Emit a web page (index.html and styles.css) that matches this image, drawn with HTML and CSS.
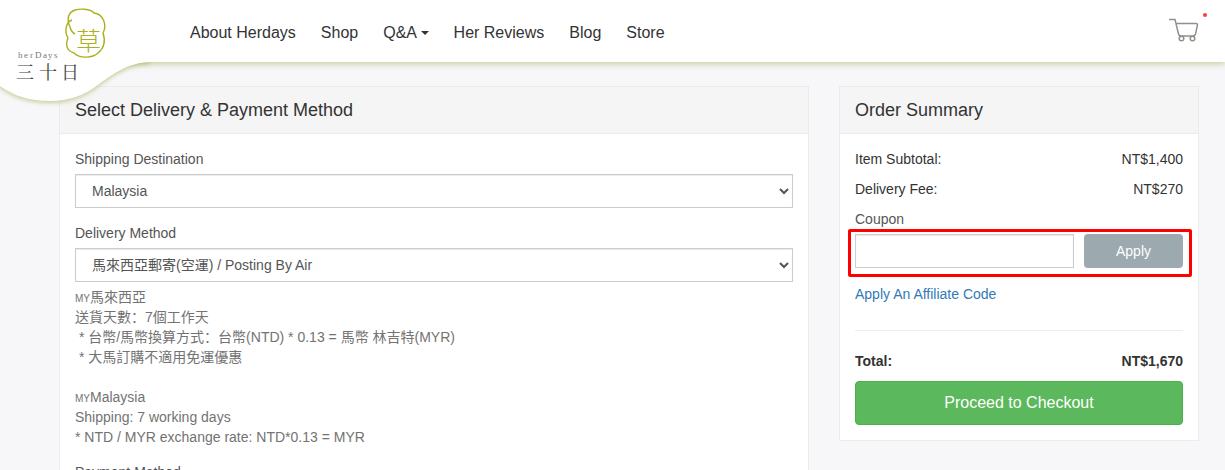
FILE: index.html
```html
<!DOCTYPE html>
<html lang="en">
<head>
    <meta charset="UTF-8">
    <meta name="viewport" content="width=device-width, initial-scale=1.0">
    <title>Checkout | herDays</title>
    <link rel="stylesheet" href="styles.css">
</head>
<body>
    <header class="site-header">
        <a class="logo" href="#" aria-label="herDays">
            <svg width="150" height="110" viewBox="0 0 150 110">
                <clipPath id="below-bar">
                    <rect x="0" y="62" width="160" height="60"/>
                </clipPath>
                <g clip-path="url(#below-bar)">
                    <path class="logo-wave" d="M-10 50 H150 V62 C128 63 116 72 99 84 C84 96 68 101 50 101 C30 101 14 96 0 86 L-10 78 Z"/>
                </g>
                <path class="logo-ring" d="M72 20 C66 22 64 31 68 38 C65 45 67 51 74 53 C80 59 93 58 98 53 C103 49 106 42 103 33 C107 26 104 14 94 13 C90 8 79 9 75 10 C67 13 67 20 70 27 C71 31 73 33 75 34"/>
                <text class="logo-mark" x="76" y="50">草</text>
                <text class="logo-name" x="18 24 30 35 43 48 54" y="58">herDays</text>
                <text class="logo-title" x="16 39 61" y="79">三十日</text>
            </svg>
        </a>
        <nav class="main-nav">
            <a href="#">About Herdays</a>
            <a href="#">Shop</a>
            <a href="#">Q&amp;A <span class="caret"></span></a>
            <a href="#">Her Reviews</a>
            <a href="#">Blog</a>
            <a href="#">Store</a>
        </nav>
        <a class="cart" href="#" aria-label="Cart">
            <svg width="30" height="26" viewBox="0 0 30 26">
                <path d="M0 1.5 H6 L9.500 16 Q10 18 12 18 H24 Q26 18 26.500 16 L28.500 7 Q28.500 5.500 27 5.500 H7"/>
                <circle cx="12.500" cy="20.500" r="2.300"/>
                <circle cx="23.500" cy="20.500" r="2.300"/>
            </svg>
            <span class="cart-dot"></span>
        </a>
    </header>

    <main class="checkout">
        <section class="panel">
            <h2 class="panel-heading">Select Delivery &amp; Payment Method</h2>
            <div class="panel-body">
                <div class="form-group">
                    <label for="destination">Shipping Destination</label>
                    <select class="form-control" id="destination">
                        <option>Malaysia</option>
                    </select>
                </div>
                <div class="form-group">
                    <label for="delivery">Delivery Method</label>
                    <select class="form-control" id="delivery">
                        <option>馬來西亞郵寄(空運) / Posting By Air</option>
                    </select>
                    <p class="help-block"><small>MY</small>馬來西亞
送貨天數：7個工作天
 * 台幣/馬幣換算方式：台幣(NTD) * 0.13 = 馬幣 林吉特(MYR)
 * 大馬訂購不適用免運優惠

<small>MY</small>Malaysia
Shipping: 7 working days
* NTD / MYR exchange rate: NTD*0.13 = MYR</p>
                </div>
                <div class="form-group">
                    <label for="payment">Payment Method</label>
                    <select class="form-control" id="payment">
                        <option>Credit Card</option>
                    </select>
                </div>
            </div>
        </section>

        <aside class="panel">
            <h2 class="panel-heading">Order Summary</h2>
            <div class="panel-body">
                <div class="summary-row"><span>Item Subtotal:</span><span>NT$1,400</span></div>
                <div class="summary-row"><span>Delivery Fee:</span><span>NT$270</span></div>
                <label for="coupon">Coupon</label>
                <form class="coupon-row">
                    <input class="form-control" type="text" id="coupon">
                    <button class="btn btn-apply" type="button">Apply</button>
                </form>
                <a class="affiliate" href="#">Apply An Affiliate Code</a>
                <hr>
                <div class="summary-row total"><span>Total:</span><span>NT$1,670</span></div>
                <button class="btn btn-checkout" type="button">Proceed to Checkout</button>
            </div>
        </aside>
    </main>
</body>
</html>
```
FILE: styles.css
```css
* {
    box-sizing: border-box;
}

body {
    margin: 0;
    background-color: #f7f7f9;
    color: #333;
    font-family: "Liberation Sans", Arial, "Noto Sans CJK SC", sans-serif;
    font-size: 14px;
    line-height: 20px;
}

/* header */
.site-header {
    position: sticky;
    top: 0;
    z-index: 10;
    display: flex;
    align-items: center;
    height: 62px;
    padding: 0 26px 0 178px;
    background-color: #fff;
    box-shadow: 0 2px 6px rgba(160, 165, 70, 0.5);
}

.logo {
    position: absolute;
    top: 0;
    left: 0;
    height: 110px;
}

.logo svg {
    display: block;
    overflow: visible;
}

.logo-wave {
    fill: #fff;
    filter: drop-shadow(0 2px 2px rgba(160, 165, 70, 0.5));
}

.logo-ring {
    fill: none;
    stroke: #abb11c;
    stroke-width: 1.4;
}

.logo-mark {
    fill: #abb11c;
    font-family: "Noto Sans CJK TC", sans-serif;
    font-size: 25px;
    font-weight: 300;
}

.logo-name {
    fill: #777;
    font-family: "Liberation Serif", serif;
    font-size: 9px;
}

.logo-title {
    fill: #444;
    font-family: "Noto Serif CJK TC", "Noto Sans CJK TC", serif;
    font-size: 18px;
}

.main-nav {
    display: flex;
    gap: 1px;
    margin-top: 3px;
}

.main-nav a {
    padding: 0 12px;
    color: #333;
    font-size: 16px;
    text-decoration: none;
}

.caret {
    display: inline-block;
    vertical-align: middle;
    border-top: 4px solid;
    border-right: 4px solid transparent;
    border-left: 4px solid transparent;
}

.cart {
    position: relative;
    margin-left: auto;
}

.cart svg {
    display: block;
    fill: none;
    stroke: #92908a;
    stroke-width: 1.5;
}

.cart-dot {
    position: absolute;
    top: -5px;
    right: -8px;
    width: 4px;
    height: 4px;
    border-radius: 50%;
    background-color: #ff3b3b;
}

/* panels */
.checkout {
    display: grid;
    grid-template-columns: 25fr 12fr;
    gap: 30px;
    align-items: start;
    padding: 24px 26px 24px 59px;
}

.panel {
    border: 1px solid #ebebeb;
    background-color: #fff;
}

.panel-heading {
    margin: 0;
    padding: 13px 15px;
    border-bottom: 1px solid #ebebeb;
    background-color: #f5f5f5;
    font-size: 18px;
    font-weight: normal;
}

.panel-body {
    padding: 15px;
}

.form-group {
    margin-bottom: 15px;
}

label {
    display: block;
    margin-bottom: 5px;
    color: #555;
}

.form-control {
    display: block;
    width: 100%;
    height: 34px;
    padding: 6px 12px;
    border: 1px solid #ccc;
    border-radius: 0;
    background-color: #fff;
    box-shadow: inset 0 1px 1px rgba(0, 0, 0, 0.08);
    color: #555;
    font: inherit;
}

.help-block {
    margin: 5px 0 14px;
    color: #737373;
    white-space: pre-wrap;
}

.help-block small {
    font-size: 10px;
    line-height: 1;
}

/* order summary */
.summary-row {
    display: flex;
    justify-content: space-between;
    margin-bottom: 10px;
}

.coupon-row {
    position: relative;
    display: flex;
    gap: 10px;
    margin-bottom: 16px;
}

.coupon-row::after {
    content: "";
    position: absolute;
    inset: -5px -9px -9px -7px;
    border: 3px solid #f00;
    border-radius: 2px;
    pointer-events: none;
}

.coupon-row .form-control {
    flex: 1;
    min-width: 0;
}

.btn {
    border: 1px solid transparent;
    border-radius: 4px;
    color: #fff;
    font: inherit;
    cursor: pointer;
}

.btn-apply {
    width: 99px;
    background-color: #9ca9ae;
}

.btn-checkout {
    width: 100%;
    height: 44px;
    border-color: #4cae4c;
    background-color: #5cb85c;
    font-size: 16px;
}

.affiliate {
    display: block;
    color: #337ab7;
    text-decoration: none;
}

hr {
    margin: 26px 0 20px;
    border: 0;
    border-top: 1px solid #eee;
}

.total {
    font-weight: bold;
}
```
